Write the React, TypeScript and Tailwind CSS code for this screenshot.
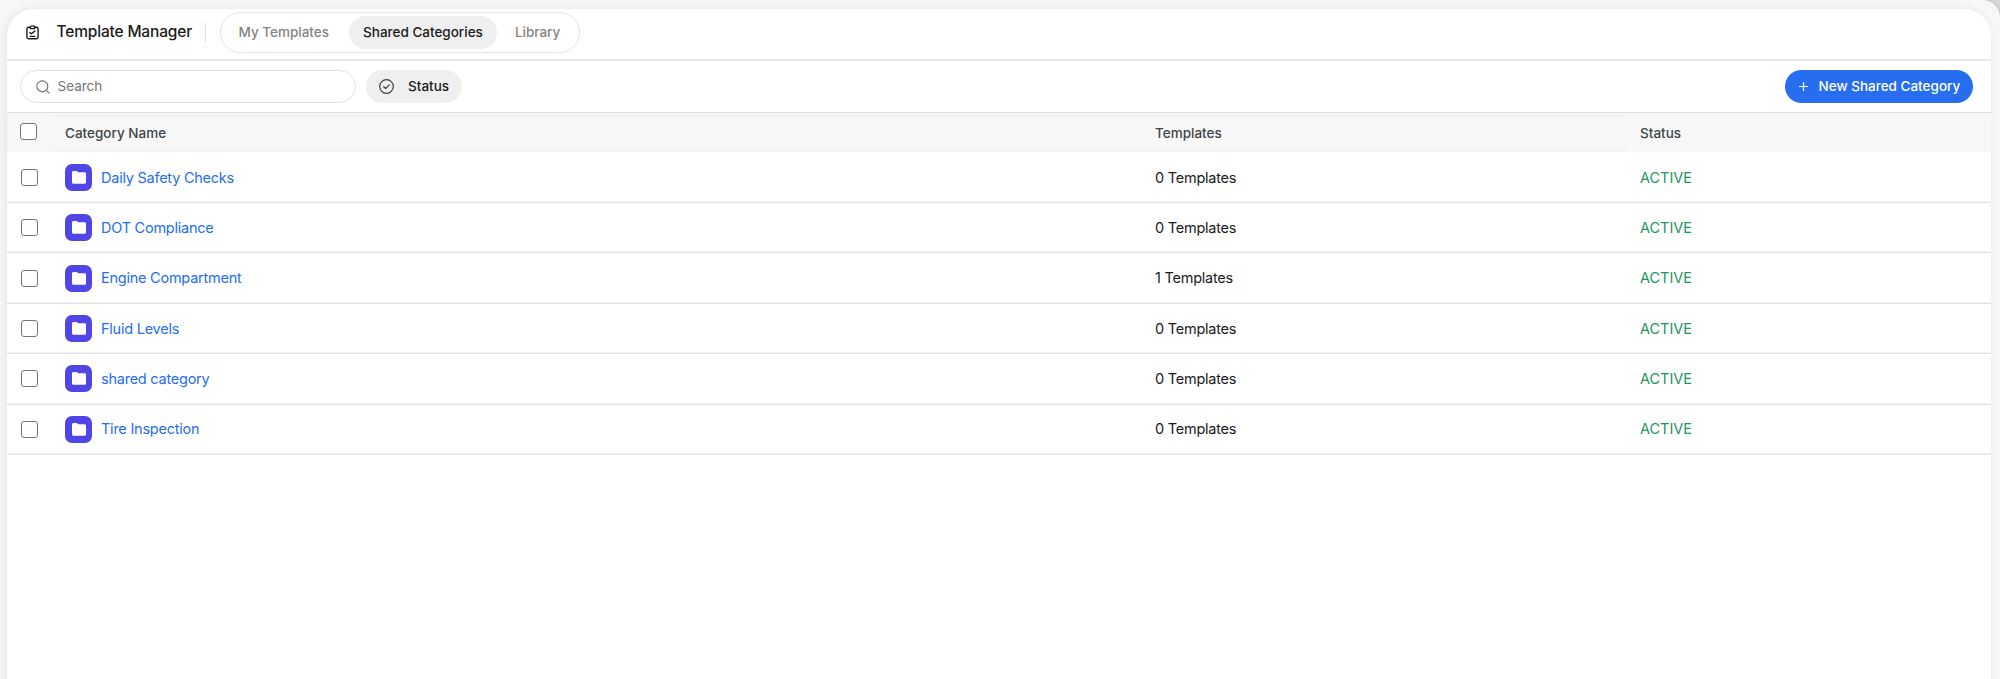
import { useState } from 'react';

interface Category {
  id: number;
  name: string;
  templates: number;
  status: string;
}

const categories: Category[] = [
  { id: 1, name: 'Daily Safety Checks', templates: 0, status: 'ACTIVE' },
  { id: 2, name: 'DOT Compliance', templates: 0, status: 'ACTIVE' },
  { id: 3, name: 'Engine Compartment', templates: 1, status: 'ACTIVE' },
  { id: 4, name: 'Fluid Levels', templates: 0, status: 'ACTIVE' },
  { id: 5, name: 'shared category', templates: 0, status: 'ACTIVE' },
  { id: 6, name: 'Tire Inspection', templates: 0, status: 'ACTIVE' },
];

function ClipboardIcon() {
  return (
    <svg className="h-[15px] w-[13px]" viewBox="0 0 13 15" fill="none" stroke="#1b1b1b" strokeWidth="1.4" strokeLinecap="round" strokeLinejoin="round">
      <path d="M4.2 2.2H2.6C1.5 2.2.9 2.9.9 3.9v8.2c0 1.1.6 1.7 1.7 1.7h7.8c1.1 0 1.7-.6 1.7-1.7V3.9c0-1-.6-1.7-1.7-1.7H8.8" />
      <path d="M4.3 3.6V2.4C4.3 1.4 5.2.9 6.5.9s2.2.5 2.2 1.5v1.2z" />
      <path d="M3.9 7.6l1.5 1.2 3.4-2.7" />
      <path d="M4 11.3h5" strokeWidth="1.2" />
    </svg>
  );
}

function SearchIcon() {
  return (
    <svg className="h-[14px] w-[14px]" viewBox="0 0 14 14" fill="none" stroke="#737373" strokeWidth="1.2" strokeLinecap="round">
      <circle cx="6.3" cy="6.3" r="5.5" />
      <path d="M10.3 10.3l2.8 2.8" />
    </svg>
  );
}

function CheckCircleIcon() {
  return (
    <svg className="h-[15px] w-[15px]" viewBox="0 0 15 15" fill="none" stroke="#404040" strokeWidth="1.2" strokeLinecap="round" strokeLinejoin="round">
      <circle cx="7.5" cy="7.5" r="6.8" />
      <path d="M4.7 7.7l1.9 1.8 3.7-3.6" />
    </svg>
  );
}

function FolderIcon() {
  return (
    <svg className="h-[13px] w-[14px]" viewBox="0 0 14 13" fill="#fff">
      <path d="M0 1.5C0 .6.6 0 1.5 0h2.8c.5 0 .9.2 1.2.5l.6.8h6.4c.9 0 1.5.6 1.5 1.5v8.4c0 .9-.6 1.500-1.5 1.500h-11C.6 12.700 0 12.100 0 11.200z" />
    </svg>
  );
}

function Checkbox({ checked, onClick }: { checked: boolean; onClick: () => void }) {
  return (
    <button
      role="checkbox"
      aria-checked={checked}
      onClick={onClick}
      className={`block h-[17px] w-[17px] rounded-[3px] border border-[#767676] ${checked ? 'bg-[#266df0]' : 'bg-white'}`}
    />
  );
}

export default function App() {
  const [activeTab, setActiveTab] = useState('Shared Categories');
  const [selected, setSelected] = useState<number[]>([]);

  const allSelected = selected.length === categories.length;

  const toggle = (id: number) => {
    setSelected((prev) => (prev.includes(id) ? prev.filter((s) => s !== id) : [...prev, id]));
  };

  const tabClass = (tab: string) =>
    `h-[33px] rounded-full px-[14.5px] ${activeTab === tab ? 'bg-[#efefef] text-[#1b1b1b]' : 'text-[#858585]'}`;

  return (
    <div className="h-[679px] overflow-hidden bg-[#d8d8d8] font-['Inter',sans-serif]">
      <div className="h-full rounded-tr-[17px] bg-[#f7f7f7] pt-[9px] pr-[9px] pl-[7px] shadow-[0_0_2px_#999]">
        <div className="h-[700px] overflow-hidden rounded-t-[27px] bg-white shadow-[-2px_0_10px_rgba(0,0,0,0.07)]">
          {/* Header */}
          <header className="flex h-[52px] items-start border-b-2 border-[#e9e9e9] pt-[3px] pl-[19px]">
            <div className="flex h-[40px] items-center">
              <ClipboardIcon />
              <h1 className="ml-[17.5px] w-[135.5px] text-[15.5px] font-medium tracking-[-0.17px] whitespace-nowrap text-[#1b1b1b]">Template Manager</h1>
              <div className="ml-[13px] h-[19px] w-px bg-[#e0e0e0]" />
            </div>
            <nav className="ml-[14px] flex h-[41px] w-[360px] items-center rounded-full border border-[#e4e4e4] pl-[3px] text-[13.5px] font-medium whitespace-nowrap">
              <button className={tabClass('My Templates')} onClick={() => setActiveTab('My Templates')}>My Templates</button>
              <button className={`ml-[5px] ${tabClass('Shared Categories')}`} onClick={() => setActiveTab('Shared Categories')}>Shared Categories</button>
              <button className={`ml-[3px] ${tabClass('Library')}`} onClick={() => setActiveTab('Library')}>Library</button>
            </nav>
          </header>

          {/* Toolbar */}
          <div className="flex h-[52px] items-start border-b border-[#dfdfdf] pt-[9px] pr-[18px] pl-[13px] text-[13.5px]">
            <label className="flex h-[33px] w-[336px] items-center rounded-full border border-[#e2e2e2] pl-[15px]">
              <SearchIcon />
              <input
                placeholder="Search"
                className="ml-[7.5px] w-[260px] bg-transparent outline-none placeholder:text-[#757575]"
              />
            </label>
            <button className="ml-[10px] flex h-[33px] w-[96px] items-center rounded-full bg-[#efefef] pl-[13px] font-medium text-[#1b1b1b]">
              <CheckCircleIcon />
              <span className="ml-[14px]">Status</span>
            </button>
            <button className="ml-auto flex h-[33px] w-[188.5px] items-center rounded-full bg-[#266df0] pl-[14px] font-medium whitespace-nowrap text-white">
              <svg className="h-[9px] w-[9px]" viewBox="0 0 9 9" stroke="#fff" strokeWidth="1.2">
                <path d="M4.5 0v9M0 4.5h9" />
              </svg>
              <span className="ml-[11px]">New Shared Category</span>
            </button>
          </div>

          {/* Table head */}
          <div className="flex h-[39px] bg-[#f7f7f7] text-[13.5px] font-medium text-[#414549]">
            <div className="w-[45px] pt-[10px] pl-[13px]">
              <Checkbox
                checked={allSelected}
                onClick={() => setSelected(allSelected ? [] : categories.map((c) => c.id))}
              />
            </div>
            <div className="mt-[2px] flex h-[36px] w-[1575px] items-center border-y border-[#eeeeee]">
              <div className="w-[1090px] pl-[13px]">Category Name</div>
              <div className="pl-[13px]">Templates</div>
            </div>
            <div className="mt-[2px] flex h-[36px] items-center pl-[13px]">Status</div>
          </div>

          {/* Rows */}
          <div className="pt-[0.7px]">
            {categories.map((category) => (
              <div
                key={category.id}
                className="flex h-[50.4px] items-center border-b border-[#e3e3e3] text-[14.5px] tracking-[-0.24px] text-[#1b1b1b] shadow-[inset_0_-1px_0_#f3f3f3]"
              >
                <div className="w-[45px] pl-[14px]">
                  <Checkbox checked={selected.includes(category.id)} onClick={() => toggle(category.id)} />
                </div>
                <div className="flex w-[1090px] items-center pl-[13px]">
                  <span className="flex h-[27px] w-[27px] items-center justify-center rounded-[7px] bg-[#4f46e5]">
                    <FolderIcon />
                  </span>
                  <a className="ml-[9px] text-[#266df0]">{category.name}</a>
                </div>
                <div className="w-[485px] pl-[13px]">{category.templates} Templates</div>
                <div className="pl-[13px] tracking-normal text-[#22965a]">{category.status}</div>
              </div>
            ))}
          </div>
        </div>
      </div>
    </div>
  );
}
